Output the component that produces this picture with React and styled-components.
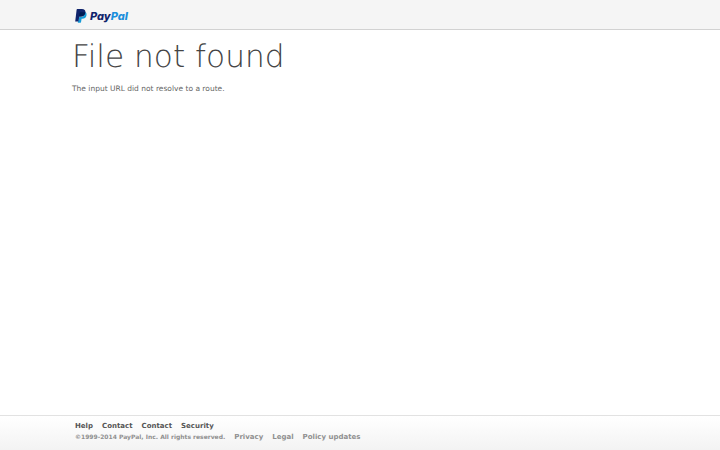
import React from "react";
import styled, { createGlobalStyle } from "styled-components";

const footerLinks = ["Help", "Contact", "Contact", "Security"];
const legalLinks = ["Privacy", "Legal", "Policy updates"];

const App = () => {
  return (
    <>
      <GlobalStyle />
      <Page>
        <Header>
          <Logo>
            <svg width="12" height="14" viewBox="0 0 24 28">
              <path
                fill="#179bd7"
                d="M20.400 6.200c2.400 1.500 3.100 3.600 2.500 6.600-.9 4.600-3.900 6.500-8.400 6.500h-1.300l-1.200 7c-.1.600-.5 1-1.100 1H5.600l1.600-9.400 2-2.100h3.300c5 0 7.600-3.300 7.900-9.600z"
              />
              <path
                fill="#10246c"
                d="M4.500 0h9.200c5.200 0 7.800 2.600 7.100 7-.8 5.200-4 7.900-9.200 7.900H8.600L6.800 25H.4L3.300 1.200C3.400.5 3.800 0 4.500 0z"
              />
              <path
                fill="#001a52"
                d="M9.500 7.500c.1-.6.500-1 1.100-1h6.600c1.300 0 2.500.1 3.500.5-.8 5.200-4 7.900-9.100 7.900H8.200z"
              />
            </svg>
            <Wordmark>
              Pay<span>Pal</span>
            </Wordmark>
          </Logo>
        </Header>
        <Main>
          <Title>File not found</Title>
          <Message>The input URL did not resolve to a route.</Message>
        </Main>
        <Footer>
          <LinkRow>
            {footerLinks.map((label, i) => (
              <FooterLink key={i} href="#">
                {label}
              </FooterLink>
            ))}
          </LinkRow>
          <LinkRow>
            <Copyright>©1999-2014 PayPal, Inc. All rights reserved.</Copyright>
            {legalLinks.map((label) => (
              <FooterLink key={label} href="#" $muted>
                {label}
              </FooterLink>
            ))}
          </LinkRow>
        </Footer>
      </Page>
    </>
  );
};

const GlobalStyle = createGlobalStyle`
  body {
    margin: 0;
    background: #fff;
    font-family: "DejaVu Sans", sans-serif;
    text-rendering: geometricPrecision;
  }
`;

const Page = styled.div`
  display: flex;
  flex-direction: column;
  height: 100vh;
  overflow: hidden;
`;

const Header = styled.header`
  box-sizing: border-box;
  height: 30px;
  padding: 9px 75px 0;
  background: #f5f5f5;
  border-bottom: 1px solid #d2d2d2;
`;

const Logo = styled.div`
  display: flex;
  align-items: flex-start;
  gap: 3px;

  svg {
    display: block;
  }
`;

const Wordmark = styled.div`
  color: #10246c;
  font: italic 800 11px/14px Inter, sans-serif;

  span {
    color: #1a8fdc;
  }
`;

const Main = styled.main`
  flex: 1;
  padding: 0 72px;
`;

const Title = styled.h1`
  margin: 8px 0 0;
  color: #444;
  font-size: 31.2px;
  font-weight: 200;
  line-height: 38px;
`;

const Message = styled.p`
  margin: 7px 0 0;
  color: #666;
  font-size: 7.5px;
  line-height: 12px;
`;

const Footer = styled.footer`
  box-sizing: border-box;
  height: 35px;
  padding: 5px 75px 0;
  border-top: 1px solid #e2e2e2;
  background: linear-gradient(#fff, #f3f3f3);
`;

const LinkRow = styled.div`
  display: flex;
  gap: 9px;
  height: 10.5px;
  line-height: 11px;
  white-space: nowrap;
`;

const FooterLink = styled.a`
  color: ${(props) => (props.$muted ? "#909090" : "#555")};
  font-size: 7px;
  font-weight: bold;
  text-decoration: none;
`;

const Copyright = styled.span`
  color: #909090;
  font-size: 6px;
  font-weight: bold;
  line-height: 11px;
`;

export default App;
